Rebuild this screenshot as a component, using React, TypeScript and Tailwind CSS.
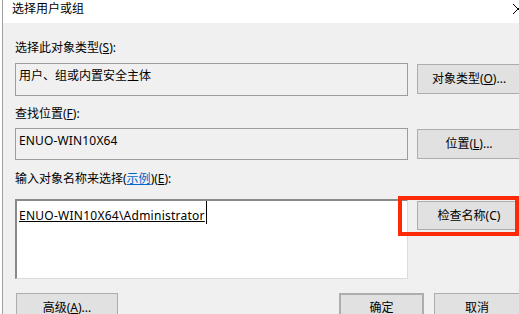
import React from "react";

const font = { fontFamily: '"Noto Sans", "Noto Sans CJK SC", sans-serif' };

function Btn({ children, className = "" }: { children: React.ReactNode; className?: string }) {
  return (
    <div
      className={
        "flex items-center justify-center bg-[#e1e1e1] border border-[#adadad] text-[12px] leading-[16px] text-black " +
        className
      }
    >
      {children}
    </div>
  );
}

export default function App() {
  return (
    <div className="relative w-[519px] h-[314px] overflow-hidden bg-white flex" style={font}>
      <div className="w-[2px] shrink-0" />
      <div className="w-px shrink-0 bg-[#a0a0a0]" />
      <div className="flex-1 flex flex-col min-w-0">
        <div className="h-[23px] shrink-0 bg-white pl-[9px] pt-[1px] text-[12px] leading-[16px] text-black">
          选择用户或组
        </div>
        <div className="flex-1 bg-[#f0f0f0] pl-[12px] flex flex-col text-[12px] leading-[16px] text-black">
          <div className="mt-[17px] h-[16px]">
            选择此对象类型(<span className="underline">S</span>):
          </div>
          <div className="mt-[7px] flex items-start">
            <div className="w-[393px] h-[33px] shrink-0 border border-[#9c9c9c] bg-[#f0f0f0] pl-[3px] pt-[4px]">
              用户、组或内置安全主体
            </div>
            <Btn className="ml-[9px] mt-[1px] w-[104px] h-[30px] shrink-0">
              对象类型(<span className="underline">O</span>)...
            </Btn>
          </div>
          <div className="mt-[10px] h-[16px]">
            查找位置(<span className="underline">F</span>):
          </div>
          <div className="mt-[6px] flex items-start">
            <div className="w-[393px] h-[32px] shrink-0 border border-[#9c9c9c] bg-[#f0f0f0] pl-[3px] pt-[4px] tracking-[0.15px]">
              ENUO-WIN10X64
            </div>
            <Btn className="ml-[9px] mt-[1px] w-[104px] h-[30px] shrink-0">
              位置(<span className="underline">L</span>)...
            </Btn>
          </div>
          <div className="mt-[11px] h-[16px]">
            输入对象名称来选择(<span className="text-[#0066cc] underline">示例</span>)(
            <span className="underline">E</span>):
          </div>
          <div className="mt-[12px] flex items-start">
            <div className="w-[393px] h-[80px] shrink-0 bg-white border-t-2 border-l-2 border-r border-b border-t-[#8a8a8a] border-l-[#8a8a8a] border-r-[#dcdcdc] border-b-[#dcdcdc] pl-[2px] flex items-start">
              <span className="mt-[7px] underline whitespace-nowrap tracking-[0.25px]">ENUO-WIN10X64\Administrator</span>
              <span className="w-px h-[23px] bg-black ml-px" />
            </div>
            <Btn className="ml-[9px] mt-[2px] w-[104px] h-[29px] shrink-0">检查名称(C)</Btn>
          </div>
          <div className="mt-[14px] flex items-start">
            <Btn className="ml-px w-[102px] h-[30px] shrink-0 !items-start pt-[6px]">
              高级(<span className="underline">A</span>)...
            </Btn>
            <Btn className="ml-[221px] w-[85px] h-[30px] shrink-0 border-2 border-[#0078d7] !items-start pt-[5px]">确定</Btn>
            <Btn className="ml-[10px] w-[86px] h-[30px] shrink-0 !items-start pt-[6px]">取消</Btn>
          </div>
        </div>
      </div>
      <svg className="absolute left-[512px] top-[3px]" width="12" height="12" viewBox="0 0 12 12">
        <path d="M1 1 L11 11 M11 1 L1 11" stroke="#000" strokeWidth="1" fill="none" />
      </svg>
      <div className="absolute left-[398px] top-[196px] w-[121px] h-[40px] border-4 border-[#fa2a0a]" />
    </div>
  );
}
